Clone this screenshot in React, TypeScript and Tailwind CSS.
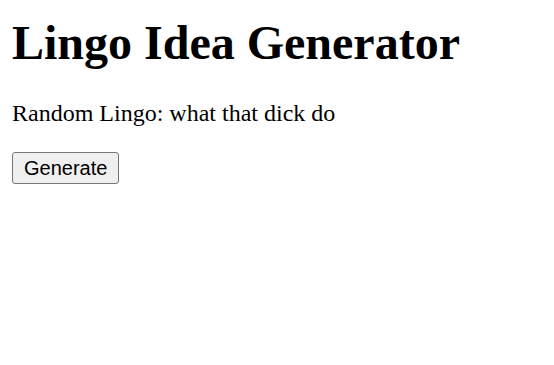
import React, { useState } from 'react';

const LINGO = ['what that dick do'];

export default function App() {
  const [lingo, setLingo] = useState(LINGO[0]);

  return (
    <div className="min-h-screen bg-white px-3 pt-[15px] text-black font-['Liberation_Serif','Times_New_Roman',serif]">
      <h1 className="text-[48px] leading-[55px] font-bold">Lingo Idea Generator</h1>
      <p className="mt-[29px] text-[24px] leading-[28px]">Random Lingo: {lingo}</p>
      <button
        onClick={() => setLingo(LINGO[Math.floor(Math.random() * LINGO.length)])}
        className="mt-[25px] h-[32px] px-[11px] rounded-[3px] border border-[#767676] bg-[#efefef] text-[20px] leading-[23px] font-['Liberation_Sans',Arial,sans-serif] text-black"
      >
        Generate
      </button>
    </div>
  );
}
